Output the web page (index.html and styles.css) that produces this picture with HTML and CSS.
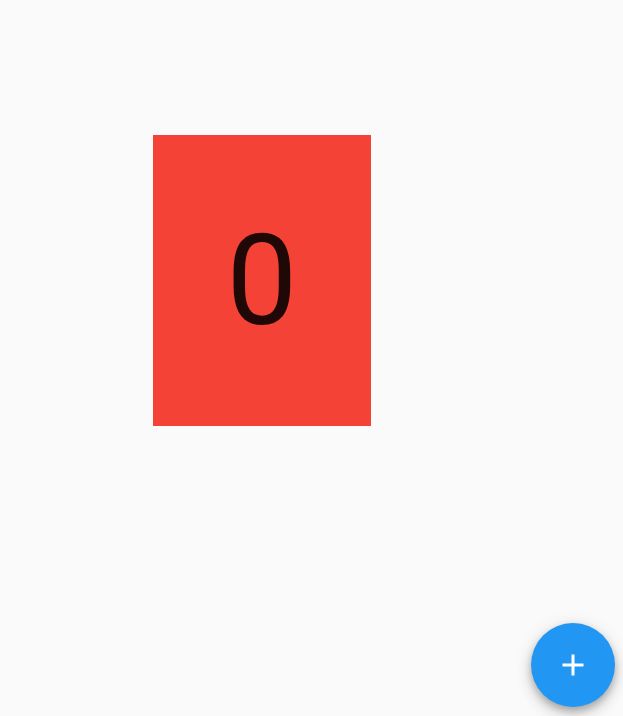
FILE: index.html
```html
<!DOCTYPE html>
<html>
<head>
<meta charset="utf-8">
<link rel="stylesheet" href="styles.css">
</head>
<body>
<main class="stage">
  <div class="card"><span class="count">0</span></div>
</main>
<button class="fab" aria-label="Add">
  <svg viewBox="0 0 24 24" width="36" height="36"><path fill="#fff" d="M19 13h-6v6h-2v-6H5v-2h6V5h2v6h6v2z"/></svg>
</button>
</body>
</html>
```

FILE: styles.css
```css
html, body {
  margin: 0;
  padding: 0;
  width: 623px;
  height: 716px;
  background: #fafafa;
  overflow: hidden;
  font-family: Roboto, "Liberation Sans", sans-serif;
}
.stage {
  padding: 135px 0 0 153px;
}
.card {
  width: 218px;
  height: 291px;
  background: #f44336;
  display: flex;
  align-items: center;
  justify-content: center;
}
.count {
  font-size: 126px;
  line-height: 1;
  color: rgba(0, 0, 0, 0.87);
}
.fab {
  position: absolute;
  right: 8px;
  bottom: 9px;
  width: 84px;
  height: 84px;
  border-radius: 50%;
  border: none;
  padding: 0;
  background: #2196f3;
  display: flex;
  align-items: center;
  justify-content: center;
  box-shadow: 0 4px 7px rgba(0,0,0,0.2), 0 9px 15px rgba(0,0,0,0.12), 0 2px 18px rgba(0,0,0,0.1);
}
```
